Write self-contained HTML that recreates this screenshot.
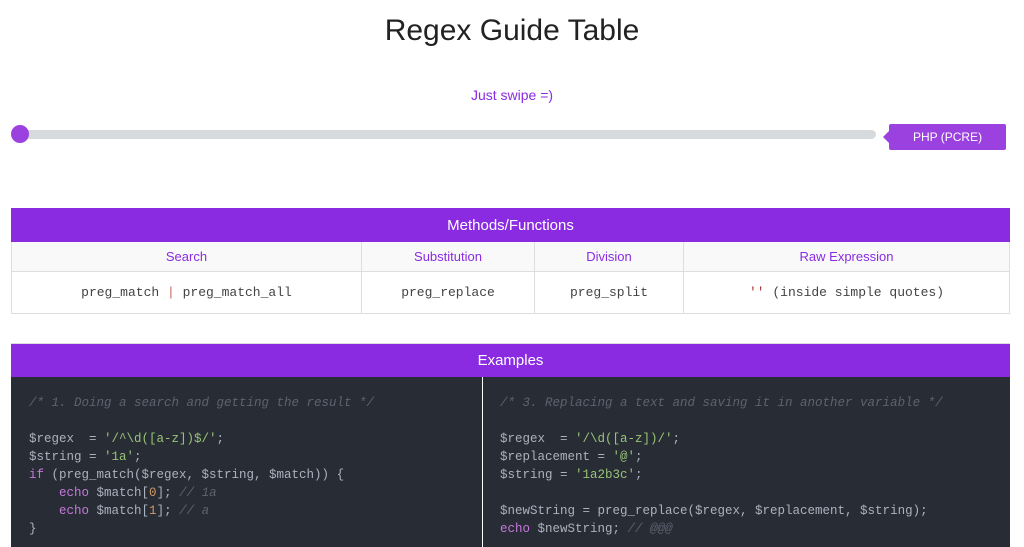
<!DOCTYPE html>
<html><head><style>
body{margin:0;background:#fff;font-family:"Liberation Sans",sans-serif;width:1024px;height:547px;overflow:hidden;position:relative}
.a{position:absolute}
h1{position:absolute;top:14px;left:0;width:1024px;text-align:center;margin:0;font-weight:normal;font-size:30px;color:#222}
table{border-collapse:collapse;position:absolute;left:11px;width:999px;table-layout:fixed}
td,th{border:1px solid #dedede;text-align:center;font-weight:normal;padding:0}
.mono{font-family:"Liberation Mono",monospace;font-size:13px;color:#444}
pre{margin:0;font-family:"Liberation Mono",monospace;font-size:12.5px;line-height:18px;color:#abb2bf}
.c{color:#5c6370;font-style:italic}.s{color:#98c379}.k{color:#c678dd}.n{color:#d19a66}
</style></head><body>
<h1>Regex Guide Table</h1>
<div class="a" style="top:87px;left:0;width:1024px;text-align:center;color:#8a2be2;font-size:14px">Just swipe =)</div>
<div class="a" style="left:12px;top:130px;width:864px;height:9px;border-radius:5px;background:#d7dadd"></div>
<div class="a" style="left:11px;top:125px;width:18px;height:18px;border-radius:50%;background:#9b41e0"></div>
<div class="a" style="left:889px;top:124px;width:117px;height:26px;background:#9b41e0;border-radius:2px;color:#fff;font-size:12px;line-height:26px;text-align:center">PHP (PCRE)</div>
<div class="a" style="left:883px;top:131px;width:0;height:0;border-top:6px solid transparent;border-bottom:6px solid transparent;border-right:6px solid #9b41e0"></div>
<table style="top:208px">
<colgroup><col style="width:350px"><col style="width:173px"><col style="width:149px"><col></colgroup>
<tr><th colspan="4" style="background:#8a2be2;color:#fff;height:32px;font-size:15px;border-color:#8a2be2">Methods/Functions</th></tr>
<tr style="background:#f9f9f9;color:#8a2be2;font-size:13px"><td style="height:29px">Search</td><td>Substitution</td><td>Division</td><td>Raw Expression</td></tr>
<tr class="mono"><td style="height:41px">preg_match <span style="color:#c66">|</span> preg_match_all</td><td>preg_replace</td><td>preg_split</td><td><span style="color:#a33">''</span> (inside simple quotes)</td></tr>
</table>
<div class="a" style="left:11px;top:343px;width:999px;height:34px;background:#8a2be2;color:#fff;font-size:15px;line-height:34px;text-align:center;border-top:1px solid #ddd">Examples</div>
<div class="a" style="left:11px;top:377px;width:999px;height:170px;background:#282c34"></div>
<div class="a" style="left:482px;top:377px;width:1px;height:170px;background:#fff"></div>
<pre class="a" style="left:29px;top:394px"><span class="c">/* 1. Doing a search and getting the result */</span>

$regex  = <span class="s">'/^\d([a-z])$/'</span>;
$string = <span class="s">'1a'</span>;
<span class="k">if</span> (preg_match($regex, $string, $match)) {
    <span class="k">echo</span> $match[<span class="n">0</span>]; <span class="c">// 1a</span>
    <span class="k">echo</span> $match[<span class="n">1</span>]; <span class="c">// a</span>
}</pre>
<pre class="a" style="left:500px;top:394px"><span class="c">/* 3. Replacing a text and saving it in another variable */</span>

$regex  = <span class="s">'/\d([a-z])/'</span>;
$replacement = <span class="s">'@'</span>;
$string = <span class="s">'1a2b3c'</span>;

$newString = preg_replace($regex, $replacement, $string);
<span class="k">echo</span> $newString; <span class="c">// @@@</span></pre>
</body></html>
